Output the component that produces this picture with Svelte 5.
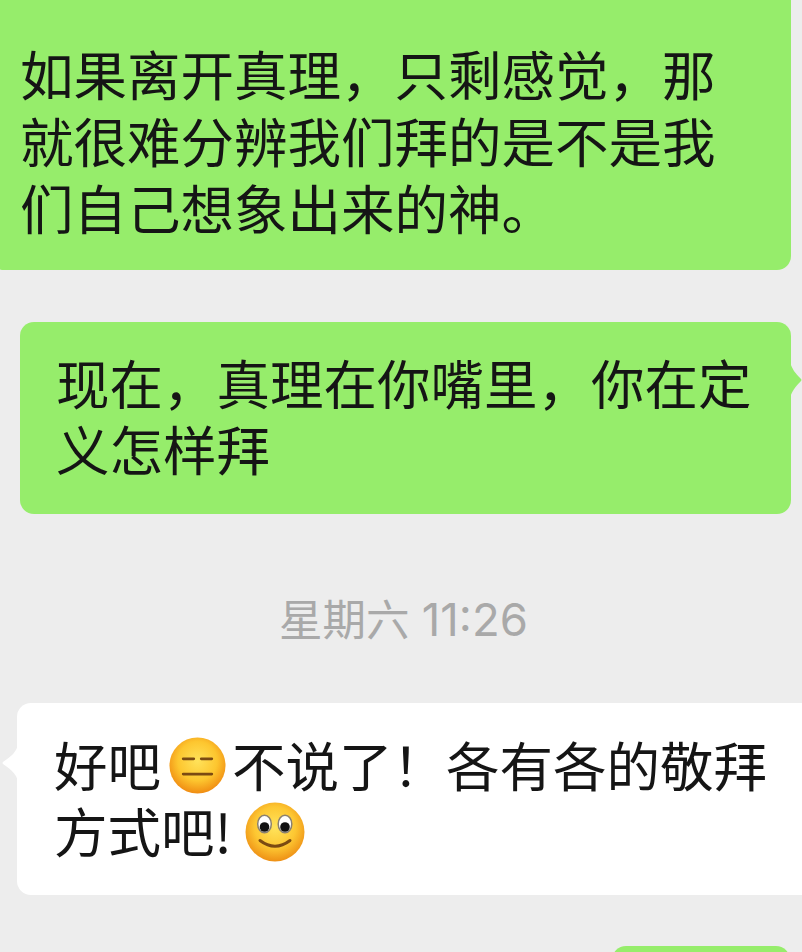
<script>
  const messages = [
    { id: 'a', text: '如果离开真理，只剩感觉，那就很难分辨我们拜的是不是我们自己想象出来的神。' },
    { id: 'b', text: '现在，真理在你嘴里，你在定义怎样拜' },
  ]
</script>

{#snippet neutralFace()}
  <svg class="emoji neutral" viewBox="0 0 60 60" aria-hidden="true">
    <defs>
      <radialGradient id="faceA" cx="50%" cy="42%" r="58%">
        <stop offset="0" stop-color="#ffe25a" />
        <stop offset="0.6" stop-color="#fdc62f" />
        <stop offset="1" stop-color="#f08c12" />
      </radialGradient>
    </defs>
    <circle cx="30" cy="30" r="29.500" fill="url(#faceA)" />
    <path d="M15 23h11M34 23h11M15 39h30" stroke="#7b4a12" stroke-width="3" stroke-linecap="round" fill="none" />
  </svg>
{/snippet}

{#snippet smileFace()}
  <svg class="emoji smile" viewBox="0 0 60 60" aria-hidden="true">
    <defs>
      <radialGradient id="faceB" cx="50%" cy="42%" r="58%">
        <stop offset="0" stop-color="#ffe45c" />
        <stop offset="0.6" stop-color="#fdc732" />
        <stop offset="1" stop-color="#ee9015" />
      </radialGradient>
    </defs>
    <circle cx="30" cy="30" r="29.500" fill="url(#faceB)" />
    <ellipse cx="19.500" cy="22" rx="6.800" ry="8.800" fill="#fff" stroke="#8b8170" stroke-width="1.500" />
    <ellipse cx="40" cy="22" rx="6.800" ry="8.800" fill="#fff" stroke="#8b8170" stroke-width="1.500" />
    <circle cx="19.500" cy="25" r="4.800" fill="#111" />
    <circle cx="40" cy="25" r="4.800" fill="#111" />
    <path d="M15 38.500Q30 50 45 38.500" stroke="#7b4a12" stroke-width="3" stroke-linecap="round" fill="none" />
  </svg>
{/snippet}

<main class="chat">
  <div class="bubble green first">{messages[0].text}</div>

  <div class="bubble green second">
    {messages[1].text}
    <svg class="tail tail-right" viewBox="0 0 12 36" aria-hidden="true">
      <path d="M0 0C2 7 5 11 11 17Q12 18 11 19C5 25 2 29 0 36Z" />
    </svg>
  </div>

  <div class="time">星期六 <span class="clock">11:26</span></div>

  <div class="bubble white third">
    好吧{@render neutralFace()}不说了！各有各的敬拜方式吧!{@render smileFace()}
    <svg class="tail tail-left" viewBox="0 0 16 36" aria-hidden="true">
      <path d="M16 0C14 7 10 11 1 17Q0 18 1 19C10 25 14 29 16 36Z" />
    </svg>
  </div>

  <div class="bubble green fourth"></div>
</main>

<style>
  :global(body) {
    background: #ededed;
    overflow: hidden;
  }

  .chat {
    height: 952px;
    overflow: hidden;
    display: flex;
    flex-direction: column;
    font-family: "Noto Sans CJK SC", "Noto Sans", sans-serif;
    font-weight: 400;
    color: #151515;
  }

  .bubble {
    position: relative;
    box-sizing: border-box;
    font-size: 53.5px;
    line-height: 67px;
    border-radius: 14px;
  }

  .green {
    background: #96ed6b;
  }

  .white {
    background: #fff;
  }

  .first {
    flex: none;
    margin: -20px 11px 0 -10px;
    padding: 59px 30px 30px 30px;
  }

  .second {
    flex: none;
    margin: 52px 11px 0 20px;
    padding: 27px 30px 33px 36px;
    line-height: 66px;
  }

  .time {
    margin-top: 80px;
    height: 52px;
    padding-left: 5px;
    text-align: center;
    font-family: Inter, "Noto Sans CJK SC", sans-serif;
    font-size: 43.500px;
    line-height: 52px;
    color: #a9a9a9;
  }

  .clock {
    font-size: 45.500px;
  }

  .third {
    flex: none;
    margin: 57px -14px 0 17px;
    padding: 28px 30px 32px 37px;
    line-height: 66px;
  }

  .fourth {
    align-self: flex-end;
    width: 178px;
    height: 120px;
    margin: 51px 12px 0 0;
    flex: none;
  }

  .emoji {
    display: inline-block;
  }

  .neutral {
    width: 57px;
    height: 57px;
    margin: -10px 6px -10px 8px;
    vertical-align: 3.500px;
  }

  .smile {
    width: 60px;
    height: 60px;
    margin: -10px 0 -10px 13px;
    vertical-align: 1.500px;
  }

  .tail {
    position: absolute;
    height: 36px;
  }

  .tail-right {
    right: -11px;
    top: 40px;
    width: 12px;
    fill: #96ed6b;
  }

  .tail-left {
    left: -15px;
    top: 42px;
    width: 16px;
    fill: #fff;
  }
</style>
